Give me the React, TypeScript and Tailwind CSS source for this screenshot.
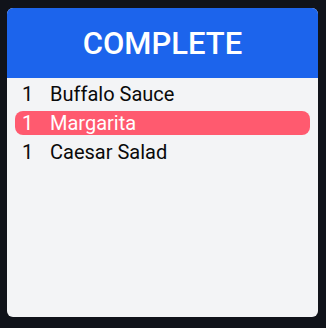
export default function App() {
  const items = [
    { qty: 1, name: "Buffalo Sauce", active: false },
    { qty: 1, name: "Margarita", active: true },
    { qty: 1, name: "Caesar Salad", active: false },
  ];
  return (
    <div className="w-[326px] h-[328px] bg-[#10131a] pt-[8px] pl-[7px]" style={{ fontFamily: "Roboto, 'Noto Sans', sans-serif" }}>
      <div className="w-[311px] h-[309px] bg-[#f3f4f6] rounded-[6px] overflow-hidden flex flex-col">
        <div className="h-[70px] bg-[#1c64ec] flex items-center justify-center text-white text-[31px] font-medium leading-none">
          COMPLETE
        </div>
        <div className="flex flex-col gap-[5px] px-[8px] pt-[4px]">
          {items.map((it, i) => (
            <div
              key={i}
              className={
                it.active
                  ? "flex items-center h-[24px] rounded-[8px] bg-[#ff5a6f] text-white pl-[7px] text-[20px] leading-[24px]"
                  : "flex items-center h-[24px] rounded-[8px] text-[#0a0a0a] pl-[7px] text-[20px] leading-[24px]"
              }
            >
              <span className="w-[28px] shrink-0">{it.qty}</span>
              <span>{it.name}</span>
            </div>
          ))}
        </div>
      </div>
    </div>
  );
}
